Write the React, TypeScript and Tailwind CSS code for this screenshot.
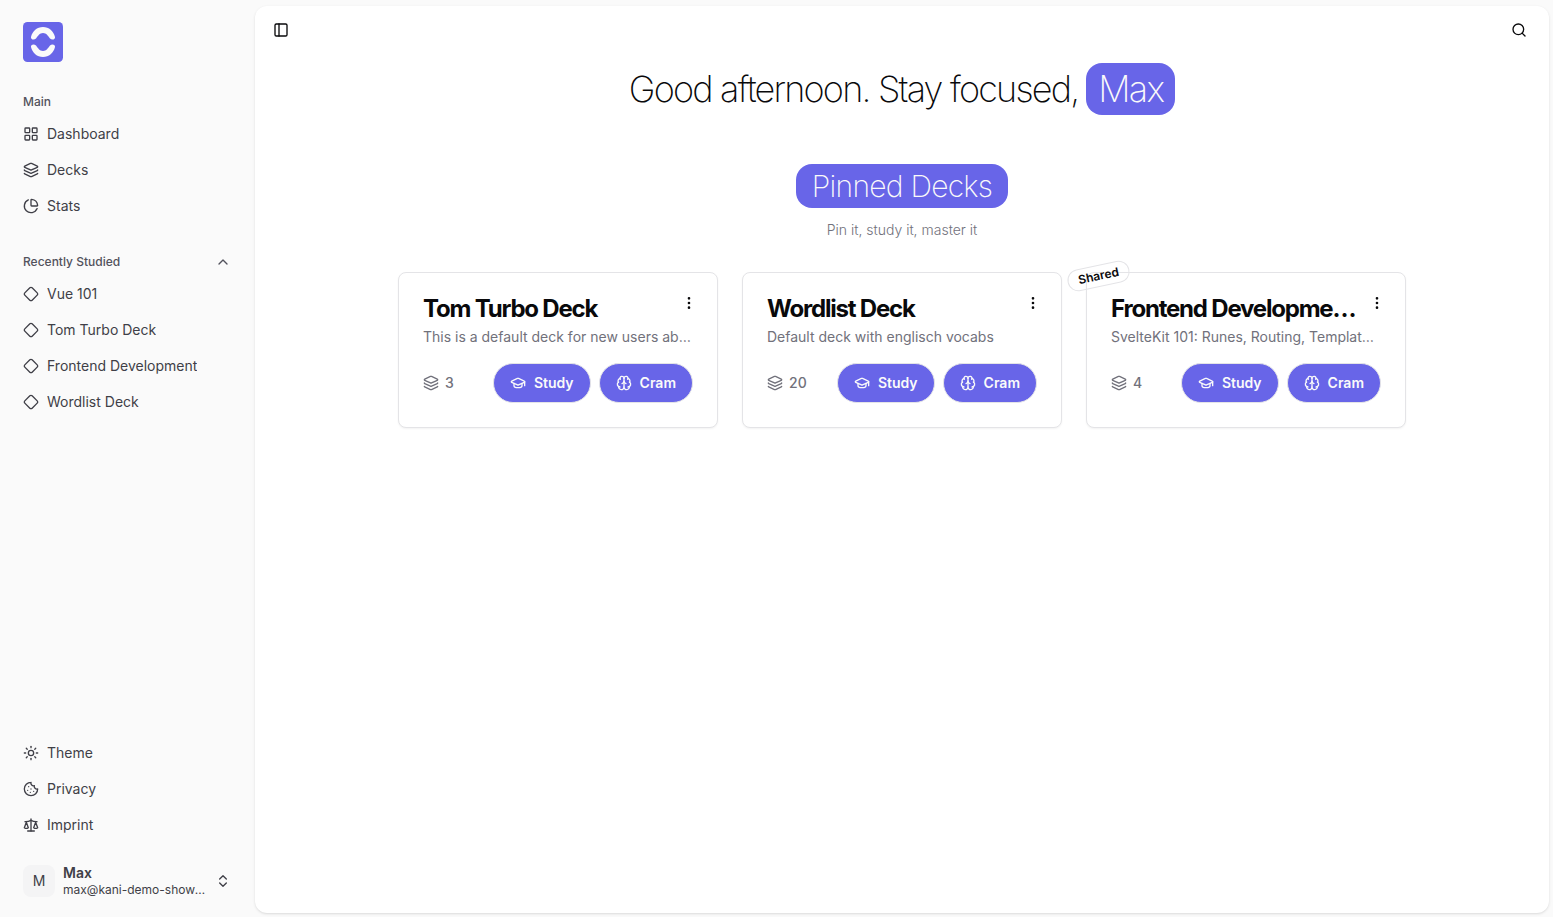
import type { ReactNode } from "react";
import {
  Brain,
  ChevronUp,
  ChevronsUpDown,
  Cookie,
  Diamond,
  EllipsisVertical,
  GraduationCap,
  Layers,
  LayoutGrid,
  PanelLeft,
  PieChart,
  Scale,
  Search,
  Sun,
  type LucideIcon,
} from "lucide-react";

type NavItem = { label: string; icon: LucideIcon };

const mainLinks: NavItem[] = [
  { label: "Dashboard", icon: LayoutGrid },
  { label: "Decks", icon: Layers },
  { label: "Stats", icon: PieChart },
];

const recentDecks: NavItem[] = [
  { label: "Vue 101", icon: Diamond },
  { label: "Tom Turbo Deck", icon: Diamond },
  { label: "Frontend Development", icon: Diamond },
  { label: "Wordlist Deck", icon: Diamond },
];

const decks = [
  {
    title: "Tom Turbo Deck",
    description: "This is a default deck for new users about Tom Turbo",
    cards: 3,
    shared: false,
  },
  {
    title: "Wordlist Deck",
    description: "Default deck with englisch vocabs",
    cards: 20,
    shared: false,
  },
  {
    title: "Frontend Development 101",
    description: "SvelteKit 101: Runes, Routing, Templates and more",
    cards: 4,
    shared: true,
  },
];

const rowClass =
  "flex h-8 w-full items-center gap-2 rounded-md px-2 text-sm hover:bg-zinc-100";

function NavLinks({ items }: { items: NavItem[] }) {
  return (
    <ul className="flex flex-col gap-1">
      {items.map(({ label, icon: Icon }) => (
        <li key={label}>
          <a href="#" className={rowClass}>
            <Icon className="size-4 shrink-0" />
            <span className="truncate">{label}</span>
          </a>
        </li>
      ))}
    </ul>
  );
}

function Logo() {
  return (
    <svg viewBox="0 0 40 40" className="size-10" aria-hidden="true">
      <rect width="40" height="40" rx="4.5" fill="#6865e8" />
      <g fill="#fafafa">
        <path d="M8 15 C9.5 9 14 5 20 5 C26 5 30.5 9 32 15 C32.5 17.5 29 18.5 27 16.5 C25 14 23.5 11 20 11 C16.5 11 15 14 13 16.5 C11 18.5 7.5 17.5 8 15 Z" />
        <path d="M8 25 C9.5 31 14 35 20 35 C26 35 30.5 31 32 25 C32.5 22.5 29 21.5 27 23.5 C25 26 23.5 29 20 29 C16.5 29 15 26 13 23.5 C11 21.5 7.5 22.5 8 25 Z" />
      </g>
    </svg>
  );
}

function Sidebar() {
  return (
    <aside className="sticky top-0 flex h-screen w-[255px] shrink-0 flex-col justify-between pt-[22px] pr-4 pb-3 pl-[15px] text-zinc-700">
      <div className="flex flex-col gap-6">
        <a href="#" aria-label="Home" className="w-fit px-2">
          <Logo />
        </a>
        <nav aria-label="Main">
          <h2 className="flex h-8 items-center px-2 text-xs font-medium text-zinc-600">Main</h2>
          <NavLinks items={mainLinks} />
        </nav>
        <nav aria-label="Recently studied">
          <button
            type="button"
            aria-expanded="true"
            className="flex h-8 w-full items-center justify-between px-2 text-xs font-medium text-zinc-600"
          >
            Recently Studied
            <ChevronUp className="size-4" />
          </button>
          <NavLinks items={recentDecks} />
        </nav>
      </div>
      <div className="flex flex-col gap-4">
        <ul className="flex flex-col gap-1">
          <li>
            <button type="button" className={rowClass}>
              <Sun className="size-4" />
              Theme
            </button>
          </li>
          <li>
            <a href="#" className={rowClass}>
              <Cookie className="size-4" />
              Privacy
            </a>
          </li>
          <li>
            <a href="#" className={rowClass}>
              <Scale className="size-4" />
              Imprint
            </a>
          </li>
        </ul>
        <button type="button" className="flex h-12 w-full items-center gap-2 rounded-md px-2 text-left">
          <span className="flex size-8 shrink-0 items-center justify-center rounded-lg bg-zinc-100 text-sm">
            M
          </span>
          <span className="grid min-w-0 flex-1">
            <span className="truncate text-sm leading-[18px] font-semibold">Max</span>
            <span className="truncate text-xs">max@kani-demo-showcase.com</span>
          </span>
          <ChevronsUpDown className="size-4 shrink-0" />
        </button>
      </div>
    </aside>
  );
}

function ActionButton({ icon: Icon, children }: { icon: LucideIcon; children: ReactNode }) {
  return (
    <button
      type="button"
      className="flex h-10 items-center gap-2 rounded-full border border-zinc-200 bg-[#6865e8] px-4 text-sm font-semibold text-zinc-50"
    >
      <Icon className="size-4" />
      {children}
    </button>
  );
}

function DeckCard({ title, description, cards, shared }: (typeof decks)[number]) {
  return (
    <article className="relative flex w-80 flex-col gap-4 rounded-lg border border-zinc-200 bg-white p-6 shadow-xs">
      {shared && (
        <span className="absolute -top-2 -left-5 -rotate-12 rounded-full border border-zinc-200 px-2.5 py-0.5 text-xs font-semibold">
          Shared
        </span>
      )}
      <button
        type="button"
        aria-label="Deck options"
        className="absolute top-3.5 right-3 flex size-8 items-center justify-center rounded-md"
      >
        <EllipsisVertical className="size-4" />
      </button>
      <div className="flex flex-col">
        <h3 className="mr-5 truncate pb-1.5 text-2xl leading-6 font-bold tracking-tighter">{title}</h3>
        <p className="truncate text-sm text-zinc-500">{description}</p>
      </div>
      <div className="flex items-center justify-between">
        <span className="flex items-center gap-1.5 text-sm font-medium text-zinc-500">
          <Layers className="size-4" />
          {cards}
        </span>
        <div className="flex gap-2">
          <ActionButton icon={GraduationCap}>Study</ActionButton>
          <ActionButton icon={Brain}>Cram</ActionButton>
        </div>
      </div>
    </article>
  );
}

export default function App() {
  return (
    <div className="flex min-h-screen bg-[#fafafa] font-['Inter',sans-serif] text-zinc-950">
      <Sidebar />
      <main className="mt-1.5 mr-1 mb-1 min-w-0 flex-1 rounded-xl bg-white shadow-sm">
        <header className="flex items-center justify-between px-3 py-1.5">
          <button type="button" aria-label="Toggle sidebar" className="flex size-7 items-center justify-center">
            <PanelLeft className="size-4" />
          </button>
          <button type="button" aria-label="Search" className="flex size-9 items-center justify-center">
            <Search className="size-4" />
          </button>
        </header>
        <div className="flex flex-col items-center px-6 pt-[9px] pb-12">
          <h1 className="flex items-center gap-2 text-4xl font-extralight tracking-tighter">
            Good afternoon. Stay focused,
            <span className="rounded-2xl bg-[#6865e8] px-3 py-1.5 text-zinc-50">Max</span>
          </h1>
          <section className="mt-[49px] flex flex-col items-center">
            <h2 className="rounded-2xl bg-[#6865e8] px-4 py-1 text-3xl font-extralight tracking-tight text-zinc-50">
              Pinned Decks
            </h2>
            <p className="mt-3 text-sm font-light text-zinc-500">Pin it, study it, master it</p>
            <div className="mt-8 flex flex-wrap justify-center gap-6">
              {decks.map((deck) => (
                <DeckCard key={deck.title} {...deck} />
              ))}
            </div>
          </section>
        </div>
      </main>
    </div>
  );
}
